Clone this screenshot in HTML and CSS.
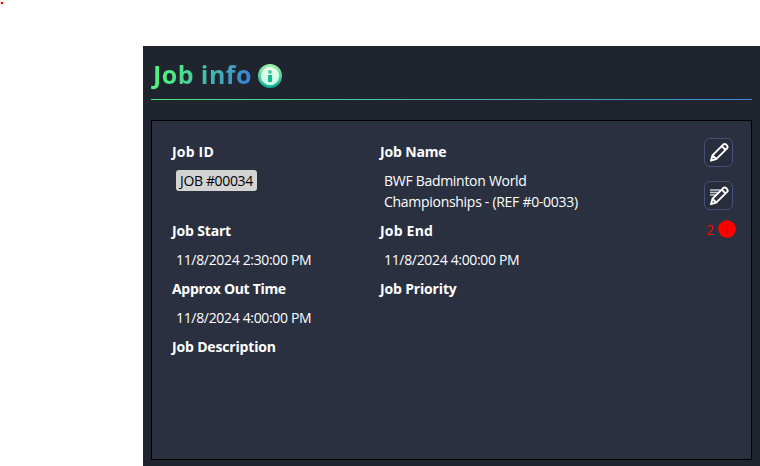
FILE: index.html
```html
<!DOCTYPE html>
<html lang="en">
<head>
<meta charset="utf-8">
<title>Job info</title>
<link rel="stylesheet" href="styles.css">
</head>
<body>
<span class="dot"></span>
<main class="panel">
  <header class="head">
    <h1 class="title">Job info</h1>
    <svg class="info" viewBox="0 0 24 24">
      <defs>
        <linearGradient id="ring" x1="0" y1="0" x2="0" y2="1"><stop offset="0" stop-color="#9cf6a4"/><stop offset="1" stop-color="#08ab97"/></linearGradient>
        <linearGradient id="face" x1="0" y1="0" x2="0" y2="1"><stop offset="0" stop-color="#effde6"/><stop offset="1" stop-color="#c4fcec"/></linearGradient>
      </defs>
      <circle cx="12" cy="12" r="12" fill="url(#ring)"/>
      <circle cx="12" cy="12" r="9.2" fill="url(#face)"/>
      <circle cx="12" cy="7.9" r="1.9" fill="#38ce9c"/>
      <path d="M10 11h4v7h-4z" fill="#19b795"/>
    </svg>
  </header>
  <section class="card">
    <div class="fields">
      <div class="field"><div class="label short">Job ID</div><div class="value"><span class="badge">JOB #00034</span></div></div>
      <div class="field"><div class="label">Job Name</div><div class="value name">BWF Badminton World<br>Championships - (REF #0-0033)</div></div>
      <div class="field"><div class="label">Job Start</div><div class="value">11/8/2024 2:30:00 PM</div></div>
      <div class="field"><div class="label short">Job End</div><div class="value">11/8/2024 4:00:00 PM</div></div>
      <div class="field"><div class="label long">Approx Out Time</div><div class="value">11/8/2024 4:00:00 PM</div></div>
      <div class="field"><div class="label">Job Priority</div></div>
      <div class="field"><div class="label">Job Description</div></div>
    </div>
    <div class="actions">
      <button class="btn" aria-label="Edit"><svg viewBox="0 0 27 27"><path class="pencil" d="M6 21.7l1.4-5.3L18.2 5.6q1.6-1.3 3 .1l.9.9q1.2 1.4 0 2.8L11.2 20.2zM16.8 7.2l3.8 3.8M7.6 16.4l3.5 3.6"/></svg></button>
      <button class="btn" aria-label="Edit notes"><svg viewBox="0 0 27 27"><path class="lines" d="M5 8h10M5 10.5h8M5 13h6"/><path class="pencil" d="M6 22.2l1.4-5.3L18.2 6.1q1.6-1.3 3 .1l.9.9q1.2 1.4 0 2.8L11.2 20.7zM16.8 7.7l3.8 3.8M7.6 16.9l3.5 3.6"/></svg></button>
      <div class="alert"><span>2</span><svg viewBox="0 0 18 18"><circle cx="9" cy="9" r="8.8" fill="red"/><path d="M9 4v7M9 12.5v1.5" stroke="#b90008" stroke-width="1"/></svg></div>
    </div>
  </section>
</main>
</body>
</html>
```

FILE: styles.css
```css
* { box-sizing: border-box; }
body {
  margin: 0;
  height: 466px;
  padding: 46px 0 0 143px;
  overflow: hidden;
  background: #fff;
  font: 14px/21px "Open Sans", "Noto Sans", sans-serif;
  color: #fff;
}
.dot {
  position: absolute;
  left: 1px;
  top: 2px;
  width: 2px;
  height: 2px;
  background: #f00;
  box-shadow: 0 0 0 1px #fde3e3;
}
.panel { height: 420px; padding: 8px 8px 0; background: #20242f; }
.head {
  display: flex;
  align-items: center;
  height: 46px;
  padding-bottom: 2px;
  border-bottom: 1px solid;
  border-image: linear-gradient(90deg, #43e97b, #3f87d2) 1;
}
.title {
  width: 104px;
  margin: 0 7px 3px -4px;
  padding-left: 6px;
  font-size: 25px;
  line-height: 38px;
  font-weight: 700;
  letter-spacing: 0.45px;
  white-space: nowrap;
  color: transparent;
  background: linear-gradient(120deg, #4df17f 25%, #3b82d6 92%);
  background-clip: text;
  -webkit-background-clip: text;
}
.info { width: 24px; height: 24px; }
.card {
  display: flex;
  justify-content: space-between;
  width: 601px;
  height: 340px;
  margin-top: 20px;
  padding: 16px 15px 0 20px;
  border: 1px solid #000;
  background: #2a303f;
}
.fields {
  display: grid;
  grid-template-columns: 208px 240px;
  align-content: start;
}
.label { padding: 4px 0; font-weight: 700; white-space: nowrap; letter-spacing: -0.16px; }
.label.short { letter-spacing: 0.2px; }
.label.long { letter-spacing: -0.32px; }
.value { padding: 4px; white-space: nowrap; letter-spacing: -0.33px; }
.value.name { letter-spacing: -0.29px; }
.badge {
  display: inline-block;
  padding: 0 4px;
  border-radius: 3px;
  background: #d3d3d3;
  color: #000;
  letter-spacing: -0.35px;
}
.actions { display: flex; flex-direction: column; align-items: flex-end; width: 34px; }
.btn {
  width: 29px;
  height: 29px;
  margin: 1px 3px 14px 0;
  padding: 0;
  border: 1px solid #46507a;
  border-radius: 6px;
  background: #272d3b;
}
.btn + .btn { margin: 0 3px 10px 0; }
.btn svg { display: block; width: 27px; height: 27px; }
.pencil { fill: #2a303f; stroke: #fff; stroke-width: 1.9; stroke-linejoin: round; }
.lines { stroke: #c5c9d0; stroke-width: 1.5; }
.alert { display: flex; align-items: center; gap: 4px; height: 18px; color: #f00; }
.alert svg { width: 18px; height: 18px; }
```
